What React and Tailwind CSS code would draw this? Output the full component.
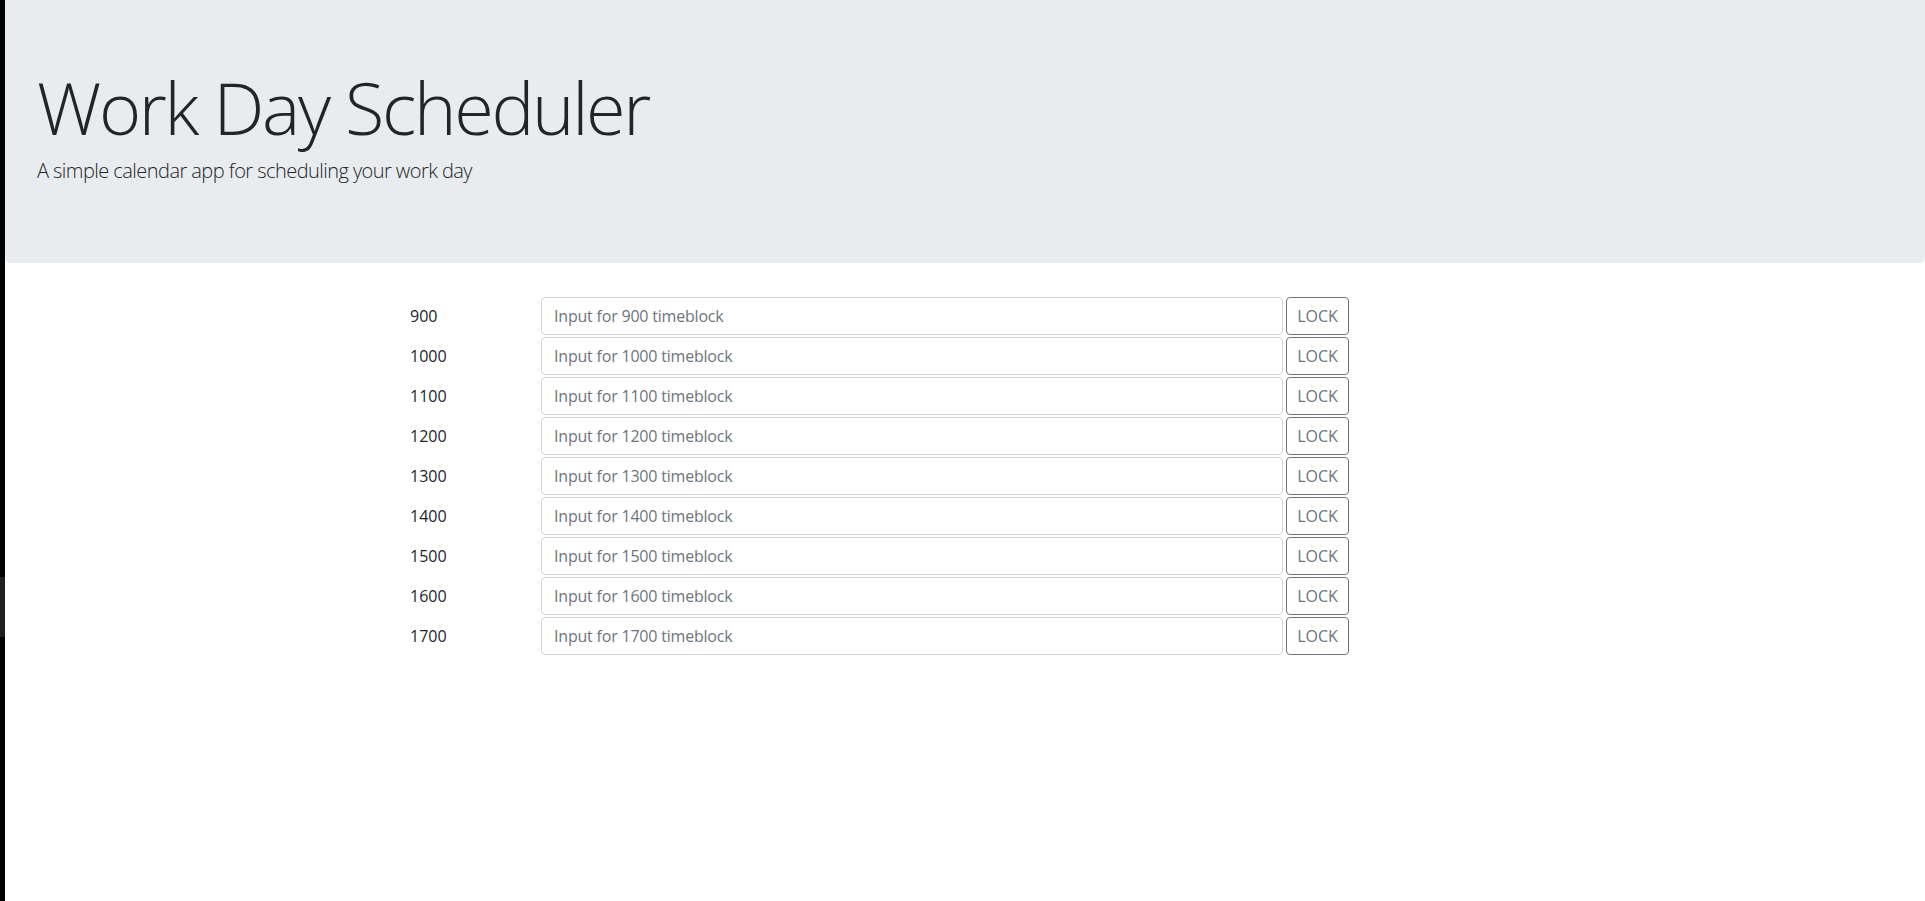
import { useState } from "react";

const hours = [900, 1000, 1100, 1200, 1300, 1400, 1500, 1600, 1700];

function TimeBlock({ hour, value, onChange }) {
  return (
    <div className="mb-[2px] flex h-[38px] items-center">
      <div className="w-[131px] text-base text-[#212529]">{hour}</div>
      <input
        type="text"
        value={value}
        onChange={(e) => onChange(hour, e.target.value)}
        placeholder={`Input for ${hour} timeblock`}
        className="h-[38px] w-[742px] rounded-[4px] border border-[#ced4da] bg-white px-3 text-base tracking-[-0.2px] text-[#495057] outline-none placeholder:text-[#6c757d]"
      />
      <button className="ml-[3px] h-[38px] w-[63px] rounded-[4px] border border-[#6c757d] text-base text-[#6c757d]">
        LOCK
      </button>
    </div>
  );
}

export default function App() {
  const [notes, setNotes] = useState({});

  const update = (hour, text) => {
    setNotes((prev) => ({ ...prev, [hour]: text }));
  };

  return (
    <div className="flex min-h-[901px] bg-white font-['Open_Sans','Noto_Sans',sans-serif] text-[#212529]">
      {/* dark strip on the left edge */}
      <div className="flex w-[5px] shrink-0 flex-col bg-black">
        <div className="h-[577px]" />
        <div className="h-[60px] bg-[#1f1f1f]" />
      </div>

      <div className="flex-1">
        <header className="mb-[34px] rounded-b-[5px] bg-[#e9ecef] px-8 pt-16 pb-[61px]">
          <h1 className="mb-[6px] text-[72px] leading-[1.2] font-light tracking-[-2.3px]">
            Work Day Scheduler
          </h1>
          <p className="mb-4 text-xl leading-[1.5] font-light tracking-[-0.55px]">
            A simple calendar app for scheduling your work day
          </p>
        </header>

        <div className="mx-auto w-[1140px] px-[15px]">
          {hours.map((hour) => (
            <TimeBlock
              key={hour}
              hour={hour}
              value={notes[hour] || ""}
              onChange={update}
            />
          ))}
        </div>
      </div>
    </div>
  );
}
